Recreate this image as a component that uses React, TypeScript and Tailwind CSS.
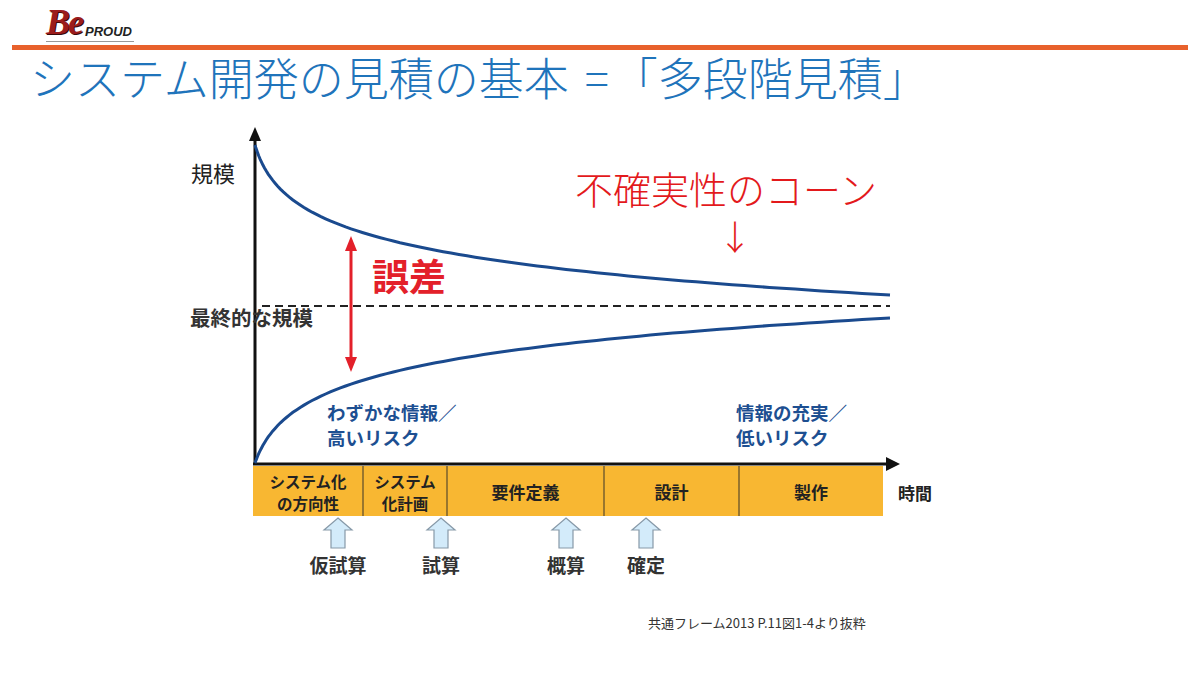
import React from "react"

const jp = "font-['Noto_Sans_CJK_JP','Noto_Sans',sans-serif]"

// cone curves: distance from the final-size line, shrinking toward the right
function curvePoints(sign: number, start: number, end: number, k: number) {
  const pts: string[] = []
  const full = Math.log(1 + 635 / k)
  for (let i = 0; i <= 90; i++) {
    const t = i / 90
    const dx = 635 * t * t
    const gap = end + (start - end) * (1 - Math.log(1 + dx / k) / full)
    pts.push(`${(255 + dx).toFixed(1)},${(306 + sign * gap).toFixed(1)}`)
  }
  return pts.join(" ")
}

const phases = [
  { x0: 253, x1: 363, lines: ["システム化", "の方向性"] },
  { x0: 363, x1: 447, lines: ["システム", "化計画"] },
  { x0: 447, x1: 604, lines: ["要件定義"] },
  { x0: 604, x1: 739, lines: ["設計"] },
  { x0: 739, x1: 883, lines: ["製作"] },
]

const estimates = [
  { x: 338, label: "仮試算" },
  { x: 441, label: "試算" },
  { x: 566, label: "概算" },
  { x: 646, label: "確定" },
]

function UpArrow({ cx }: { cx: number }) {
  const pts = [
    [cx, 518], [cx + 14, 530], [cx + 7, 530], [cx + 7, 548],
    [cx - 7, 548], [cx - 7, 530], [cx - 14, 530],
  ].map(p => p.join(",")).join(" ")
  return <polygon points={pts} fill="#d3ebfa" stroke="#8799a8" strokeWidth="1.2" />
}

function ConeChart() {
  return (
    <svg
      width="760"
      height="480"
      viewBox="180 120 760 480"
      className={`block ${jp}`}
    >
      {/* axes */}
      <line x1="255" y1="138" x2="255" y2="465" stroke="#111" strokeWidth="3" />
      <polygon points="255,127 249,141 261,141" fill="#111" />
      <line x1="253" y1="464" x2="888" y2="464" stroke="#111" strokeWidth="3" />
      <polygon points="900,464 886,457 886,471" fill="#111" />

      {/* final size */}
      <line x1="262" y1="306" x2="890" y2="306" stroke="#222" strokeWidth="2" strokeDasharray="8 5" />

      {/* cone */}
      <polyline points={curvePoints(-1, 161, 11, 11)} fill="none" stroke="#1a4a8e" strokeWidth="3" />
      <polyline points={curvePoints(1, 157, 12, 13)} fill="none" stroke="#1a4a8e" strokeWidth="3" />

      {/* error arrow */}
      <line x1="351" y1="246" x2="351" y2="362" stroke="#e3202a" strokeWidth="3" />
      <polygon points="351,236 345,251 357,251" fill="#e3202a" />
      <polygon points="351,372 345,357 357,357" fill="#e3202a" />
      <text x="372" y="291" fontSize="37" fontWeight="700" fill="#e3202a">誤差</text>

      <text x="191" y="182" fontSize="22" fill="#222">規模</text>
      <text x="190" y="326" fontSize="20.5" fontWeight="700" fill="#333">最終的な規模</text>

      <text x="575" y="204" fontSize="38" fontWeight="300" fill="#e3191c">不確実性のコーン</text>
      <text x="735" y="250" fontSize="34" fontWeight="300" fill="#e3191c" textAnchor="middle">↓</text>

      <g fontSize="18.5" fontWeight="700" fill="#1d4f91">
        <text x="327" y="420">わずかな情報／</text>
        <text x="327" y="445">高いリスク</text>
        <text x="736" y="420">情報の充実／</text>
        <text x="736" y="445">低いリスク</text>
      </g>

      {/* phases bar */}
      <rect x="253" y="466" width="630" height="50" fill="#f8b732" />
      {phases.slice(1).map(ph => (
        <line key={ph.x0} x1={ph.x0} y1="466" x2={ph.x0} y2="516" stroke="#5a4a2a" strokeWidth="1.2" />
      ))}
      <g fontWeight="700" fill="#222" textAnchor="middle">
        {phases.map(ph => {
          const cx = (ph.x0 + ph.x1) / 2
          return ph.lines.length === 2 ? (
            <g key={ph.x0} fontSize="15.5">
              <text x={cx} y="488">{ph.lines[0]}</text>
              <text x={cx} y="510">{ph.lines[1]}</text>
            </g>
          ) : (
            <text key={ph.x0} x={cx} y="499" fontSize="17">{ph.lines[0]}</text>
          )
        })}
        <text x="915" y="500" fontSize="17">時間</text>
      </g>

      {/* estimate points */}
      {estimates.map(e => (
        <g key={e.label}>
          <UpArrow cx={e.x} />
          <text x={e.x} y="573" fontSize="19" fontWeight="700" fill="#333" textAnchor="middle">{e.label}</text>
        </g>
      ))}
    </svg>
  )
}

function Logo() {
  return (
    <div className="relative flex items-end h-[40px] border-b border-[#999] pr-[2px]">
      <span className="font-['Liberation_Serif',serif] italic font-bold text-[36px] leading-[38px] text-[#9b1c1c] tracking-[-2px] [text-shadow:1px_1px_0_#3a0a0a]">
        Be
      </span>
      <span className="font-['Liberation_Sans',sans-serif] italic font-bold text-[13px] leading-[16px] ml-[3px] mb-[1px] text-[#222]">
        PROUD
      </span>
    </div>
  )
}

export default function App() {
  return (
    <div className={`w-[1200px] h-[674px] bg-white overflow-hidden ${jp}`}>
      <div className="h-[45px] pl-[46px] flex items-start pt-[2px]">
        <Logo />
      </div>
      <div className="mx-[12px] h-[5px] bg-[#e8612c]" />
      <h1 className="h-[54px] pl-[30px] text-[45px] leading-[54px] font-light text-[#1f74bb] whitespace-nowrap">
        システム開発の見積の基本<span className="ml-[16px] mr-[4px]">=</span>「多段階見積」
      </h1>
      <div className="mt-[16px] pl-[180px]">
        <ConeChart />
      </div>
      <p className="mt-[15px] pl-[648px] text-[13px] leading-[16px] text-[#333]">
        共通フレーム2013 P.11図1-4より抜粋
      </p>
    </div>
  )
}
